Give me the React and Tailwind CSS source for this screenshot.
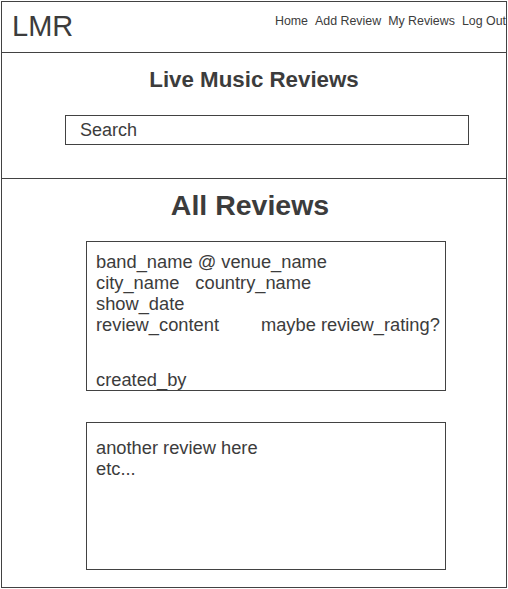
export default function App() {
  return (
    <div className="bg-white min-h-[589px] w-[508px] pt-px pl-px font-['Liberation_Sans',Arial,sans-serif] text-[#3c3c3c]">
      <div className="w-[506px] h-[587px] border border-[#424242] bg-white flex flex-col overflow-hidden">
        <header className="h-[51px] shrink-0 border-b border-[#424242] flex justify-between overflow-hidden">
          <div className="pl-[10px] self-center text-[29px] leading-none mt-[-1px]">LMR</div>
          <nav className="mt-[11px] flex gap-[7px] text-[12.4px] leading-[16px] whitespace-nowrap self-start">
            <span>Home</span>
            <span>Add Review</span>
            <span>My Reviews</span>
            <span>Log Out</span>
          </nav>
        </header>
        <section className="h-[126px] shrink-0 border-b border-[#424242] flex flex-col">
          <h1 className="pt-[16px] text-center text-[22.3px] font-bold leading-none">Live Music Reviews</h1>
          <div className="mt-[24px] ml-[63px] w-[404px] h-[30px] border border-[#424242] flex items-center pl-[14px] text-[18px] leading-none">
            Search
          </div>
        </section>
        <main className="flex flex-col">
          <h2 className="pt-[12px] text-center text-[28.5px] font-bold leading-none pr-[8px]">All Reviews</h2>
          <div className="mt-[21px] ml-[84px] w-[360px] h-[150px] border border-[#424242] pl-[9px] pt-[9px] text-[18.3px] leading-[21px] whitespace-nowrap">
            <div>band_name @ venue_name</div>
            <div className="flex">
              <span>city_name</span>
              <span className="ml-[16px]">country_name</span>
            </div>
            <div>show_date</div>
            <div className="flex">
              <span>review_content</span>
              <span className="ml-[42px]">maybe review_rating?</span>
            </div>
            <div className="mt-[34px]">created_by</div>
          </div>
          <div className="mt-[31px] ml-[84px] w-[360px] h-[148px] border border-[#424242] pl-[9px] pt-[14px] text-[18.3px] leading-[21px]">
            <div>another review here</div>
            <div>etc...</div>
          </div>
        </main>
      </div>
    </div>
  );
}
